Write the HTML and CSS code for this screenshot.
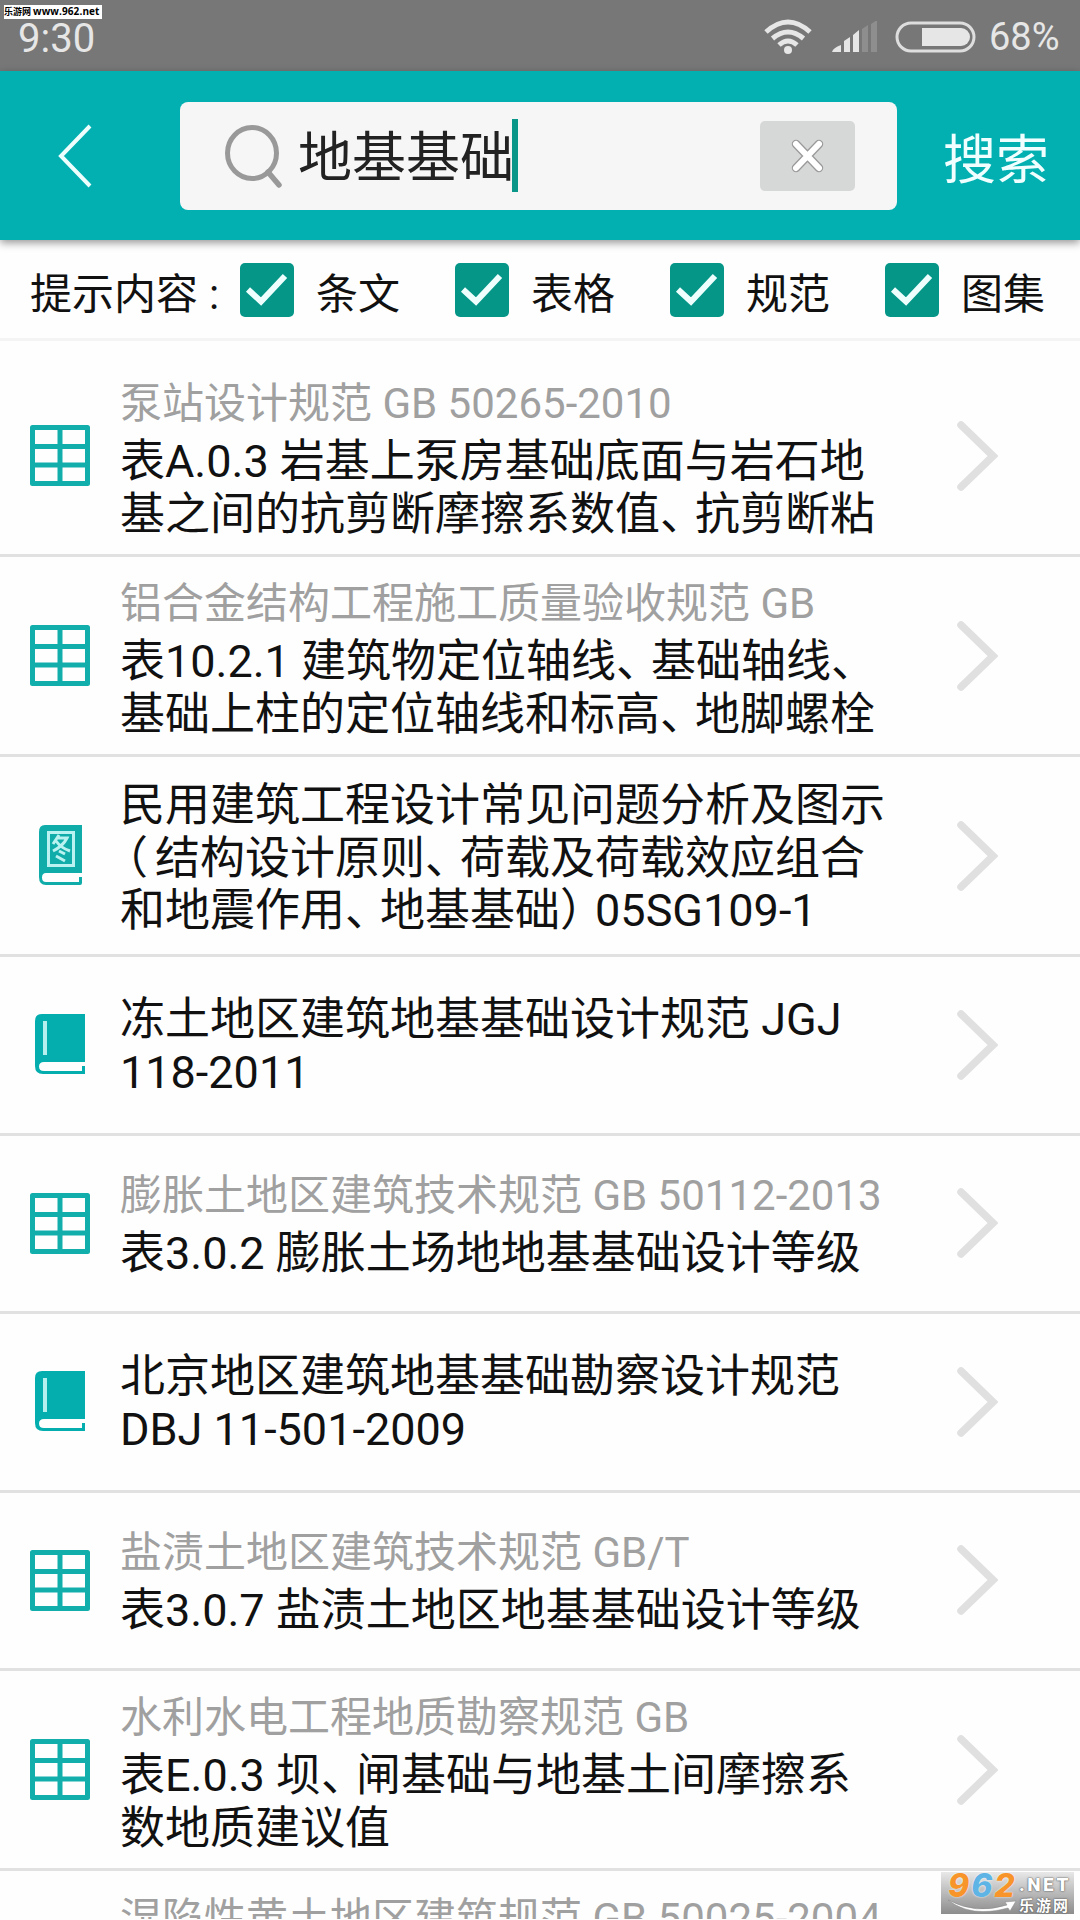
FILE: index.html
```html
<!DOCTYPE html>
<html lang="zh-CN">
<head>
    <meta charset="UTF-8">
    <meta name="viewport" content="width=device-width, initial-scale=1.0">
    <title>搜索</title>
    <link rel="stylesheet" href="styles.css">
</head>
<body>

<!-- shared icons -->
<svg class="sprite">
    <symbol id="table" viewBox="0 0 60 61">
        <path d="M2.500 2.500h55v56h-55zM30 2v57M2 21.500h56M2 40h56" fill="none" stroke="#12aeac" stroke-width="5" stroke-linejoin="round"/>
    </symbol>
    <symbol id="book" viewBox="0 0 50 61">
        <path d="M7 0h43v48H9q-5 0-5 4.500t5 4.500h38v-5h3v8H8q-8 0-8-8V7q0-7 7-7z" fill="#04aeae"/>
        <path d="M10 7v34" stroke="#b5f0ee" stroke-width="4"/>
    </symbol>
    <symbol id="atlas" viewBox="0 0 43 61">
        <path d="M6 0h37v48H7q-4 0-4 4.500t4 4.500h33v-5h3v6q0 2-2 2H7q-7 0-7-8V7q0-7 6-7z" fill="#10aca9"/>
        <path d="M9.500 7.500h25v33h-25z" fill="none" stroke="#b9f2f0" stroke-width="3"/>
        <path d="M20 10l-6 9M18 13h10q-4 8-14 13M17 16q5 7 14 10M20 26l6 3M17 31l9 5" fill="none" stroke="#b9f2f0" stroke-width="3"/>
    </symbol>
    <symbol id="next" viewBox="0 0 42 72">
        <path d="M5 5l32 31L5 67" fill="none" stroke="#e0e0e0" stroke-width="7.500" stroke-linecap="round"/>
    </symbol>
    <symbol id="check" viewBox="0 0 54 54">
        <rect width="54" height="54" rx="5" fill="#059688"/>
        <path d="M8 26.500l13 12L45 13" fill="none" stroke="#effffd" stroke-width="6"/>
    </symbol>
</svg>

<div class="status">
    <span class="time">9:30</span>
    <svg class="wifi" width="48" height="36" viewBox="0 0 48 36">
        <g fill="none" stroke="#e6e6e6" stroke-width="5">
            <path d="M2 13q22-20 44 0"/>
            <path d="M8.500 19.500q15.500-13 31 0"/>
            <path d="M15 26q9-8 18 0"/>
        </g>
        <circle cx="24" cy="31" r="4" fill="#e6e6e6"/>
    </svg>
    <svg class="signal" width="46" height="32" viewBox="0 0 46 32">
        <path d="M0 31q1-4 9-7v7zM12 20l6-4v15h-6zM21 14l6-5v22h-6z" fill="#e6e6e6"/>
        <path d="M30 8l6-4v27h-6zM39 3l6-4v32h-6z" fill="#8e8e8e"/>
    </svg>
    <svg class="battery" width="82" height="32" viewBox="0 0 82 32">
        <rect x="2" y="2" width="77" height="28" rx="14" fill="none" stroke="#dedede" stroke-width="3"/>
        <path d="M27 7h39a9 9 0 0 1 0 18H27z" fill="#e6e6e6"/>
    </svg>
    <span class="percent">68%</span>
</div>

<div class="header">
    <svg class="back" width="36" height="64" viewBox="0 0 36 64">
        <path d="M33 2L4 32l29 30" fill="none" stroke="#effffe" stroke-width="4"/>
    </svg>
    <div class="search-box">
        <svg class="glass" width="60" height="64" viewBox="0 0 60 64">
            <ellipse cx="29" cy="29" rx="24.500" ry="25.500" fill="none" stroke="#999" stroke-width="5"/>
            <path d="M45 48l11 13" stroke="#999" stroke-width="5.500" stroke-linecap="round"/>
        </svg>
        <span class="query">地基基础</span>
        <span class="caret"></span>
        <div class="clear">
            <svg width="34" height="34" viewBox="0 0 34 34">
                <path d="M5 5l23 24M28 5L5 29" stroke="#999" stroke-width="8.500" stroke-linecap="round"/>
                <path d="M5 5l23 24M28 5L5 29" stroke="#fff" stroke-width="6" stroke-linecap="round"/>
            </svg>
        </div>
    </div>
    <span class="submit">搜索</span>
</div>

<div class="filters">
    <span class="label">提示内容<span class="colon">:</span></span>
    <div class="option"><svg><use href="#check"/></svg>条文</div>
    <div class="option"><svg><use href="#check"/></svg>表格</div>
    <div class="option"><svg><use href="#check"/></svg>规范</div>
    <div class="option"><svg><use href="#check"/></svg>图集</div>
</div>

<div class="list">
    <div class="row tall">
        <div class="icon"><svg class="table"><use href="#table"/></svg></div>
        <div class="text">
            <div class="source">泵站设计规范 GB 50265-2010</div>
            <div class="title">表A.0.3 岩基上泵房基础底面与岩石地<br>基之间的抗剪断摩擦系数值<span class="p">、</span>抗剪断粘</div>
        </div>
        <svg class="next"><use href="#next"/></svg>
    </div>
    <div class="row tall">
        <div class="icon"><svg class="table"><use href="#table"/></svg></div>
        <div class="text">
            <div class="source">铝合金结构工程施工质量验收规范 GB</div>
            <div class="title">表10.2.1 建筑物定位轴线<span class="p">、</span>基础轴线<span class="p">、</span><br>基础上柱的定位轴线和标高<span class="p">、</span>地脚螺栓</div>
        </div>
        <svg class="next"><use href="#next"/></svg>
    </div>
    <div class="row tall">
        <div class="icon"><svg class="atlas"><use href="#atlas"/></svg></div>
        <div class="text">
            <div class="title">民用建筑工程设计常见问题分析及图示<br><span class="open">（</span>结构设计原则<span class="p">、</span>荷载及荷载效应组合<br>和地震作用<span class="p">、</span>地基基础<span class="p">）</span>05SG109-1</div>
        </div>
        <svg class="next"><use href="#next"/></svg>
    </div>
    <div class="row">
        <div class="icon"><svg class="book"><use href="#book"/></svg></div>
        <div class="text">
            <div class="title">冻土地区建筑地基基础设计规范 JGJ<br>118-2011</div>
        </div>
        <svg class="next"><use href="#next"/></svg>
    </div>
    <div class="row">
        <div class="icon"><svg class="table"><use href="#table"/></svg></div>
        <div class="text">
            <div class="source">膨胀土地区建筑技术规范 GB 50112-2013</div>
            <div class="title">表3.0.2 膨胀土场地地基基础设计等级</div>
        </div>
        <svg class="next"><use href="#next"/></svg>
    </div>
    <div class="row">
        <div class="icon"><svg class="book"><use href="#book"/></svg></div>
        <div class="text">
            <div class="title">北京地区建筑地基基础勘察设计规范<br>DBJ 11-501-2009</div>
        </div>
        <svg class="next"><use href="#next"/></svg>
    </div>
    <div class="row">
        <div class="icon"><svg class="table"><use href="#table"/></svg></div>
        <div class="text">
            <div class="source">盐渍土地区建筑技术规范 GB/T</div>
            <div class="title">表3.0.7 盐渍土地区地基基础设计等级</div>
        </div>
        <svg class="next"><use href="#next"/></svg>
    </div>
    <div class="row tall">
        <div class="icon"><svg class="table"><use href="#table"/></svg></div>
        <div class="text">
            <div class="source">水利水电工程地质勘察规范 GB</div>
            <div class="title">表E.0.3 坝<span class="p">、</span>闸基础与地基土间摩擦系<br>数地质建议值</div>
        </div>
        <svg class="next"><use href="#next"/></svg>
    </div>
    <div class="row last">
        <div class="icon"></div>
        <div class="text">
            <div class="source">湿陷性黄土地区建筑规范 GB 50025-2004</div>
        </div>
    </div>
</div>

<div class="site-tag">乐游网 <b>www.962.net</b></div>

<div class="logo">
    <svg class="swoosh" width="133" height="42" viewBox="0 0 133 42">
        <path d="M7 28q28 15 59 5l-2-3 11-1-6 10-2-3Q30 46 7 28z" fill="#fff" stroke="#888" stroke-width=".5"/>
    </svg>
    <div class="digits">9<span>6</span>2</div>
    <div class="names">
        <div class="net">.NET</div>
        <div class="cn">乐游网</div>
    </div>
</div>

</body>
</html>
```

FILE: styles.css
```css
* {
    box-sizing: border-box;
}

body {
    margin: 0;
    width: 1080px;
    height: 1920px;
    overflow: hidden;
    position: relative;
    background: #fefefe;
    color: #111;
    font-family: Roboto, "Noto Sans CJK SC", sans-serif;
    white-space: nowrap;
}

svg {
    display: block;
    flex: none;
}

.sprite {
    display: none;
}

.status {
    display: flex;
    align-items: center;
    height: 71px;
    padding: 3px 19px 0 18px;
    background: #777;
    color: #e6e6e6;
}

.time {
    flex: 1;
    padding-top: 4px;
    font-size: 40px;
    line-height: 34px;
}

.wifi {
    margin-right: 20px;
}

.signal {
    margin-right: 17px;
}

.battery {
    margin-right: 12px;
}

.percent {
    width: 72px;
    font-size: 38px;
}

.header {
    display: flex;
    align-items: center;
    height: 169px;
    padding-left: 57px;
    background: #02b0b1;
    position: relative;
    box-shadow: 0 3px 8px rgba(0, 0, 0, 0.4);
}

.search-box {
    display: flex;
    align-items: center;
    width: 717px;
    height: 108px;
    margin-left: 87px;
    padding-left: 43px;
    border-radius: 8px;
    background: #f6f6f6;
}

.query {
    margin-left: 15px;
    padding-top: 6px;
    font-size: 54px;
    line-height: 80px;
    color: #222;
}

.caret {
    width: 6px;
    height: 73px;
    margin-left: -2px;
    background: #0a9688;
}

.clear {
    display: flex;
    align-items: center;
    justify-content: center;
    width: 95px;
    height: 70px;
    margin-left: auto;
    margin-right: 42px;
    border-radius: 5px;
    background: #d6d8d7;
}

.submit {
    margin-left: 46px;
    font-size: 53px;
    color: #f0ffff;
}

.filters {
    display: flex;
    align-items: center;
    height: 101px;
    padding-top: 2px;
    padding-left: 30px;
    border-bottom: 3px solid #f4f4f4;
    font-size: 42px;
}

.label {
    flex: none;
    width: 210px;
}

.colon {
    margin-left: 11px;
}

.option {
    display: flex;
    flex: none;
    align-items: center;
    width: 215px;
}

.option:last-child {
    width: 180px;
}

.option svg {
    width: 54px;
    height: 54px;
    margin-right: 22px;
}

.list {
    padding-top: 16px;
}

.row {
    display: flex;
    align-items: center;
    height: 178.500px;
    border-bottom: 3px solid #e1e1e1;
}

.row.tall {
    height: 200px;
}

.icon {
    display: flex;
    justify-content: center;
    width: 120px;
    flex: none;
}

.table {
    width: 60px;
    height: 61px;
}

.book {
    width: 50px;
    height: 61px;
}

.atlas {
    width: 43px;
    height: 61px;
}

.text {
    width: 836px;
    padding-top: 4px;
}

.tall .text {
    padding-top: 7px;
}

.source {
    margin-bottom: 6px;
    color: #a0a0a0;
    font-size: 42px;
    line-height: 53px;
}

.title {
    font-size: 45px;
    line-height: 52.700px;
}

/* narrower full-width punctuation */
.p {
    letter-spacing: -10px;
}

.open {
    margin-left: -17px;
    margin-right: 7px;
}

.next {
    width: 42px;
    height: 72px;
}

.row.last {
    align-items: flex-start;
    height: 48px;
    padding-top: 17px;
    border-bottom: none;
    overflow: hidden;
}

.site-tag {
    position: absolute;
    left: 4px;
    top: 5px;
    width: 98px;
    height: 14px;
    overflow: hidden;
    background: #fff;
    color: #000;
    font: 700 9px/13px "Noto Sans CJK SC", sans-serif;
}

.site-tag b {
    font: 700 10px/13px "Open Sans", sans-serif;
    letter-spacing: 0.1px;
}

.logo {
    position: absolute;
    left: 941px;
    top: 1872px;
    display: flex;
    width: 133px;
    height: 42px;
    background: linear-gradient(#e8e8e8, #8c8c8c);
}

.swoosh {
    position: absolute;
    left: 0;
    top: 0;
}

.digits {
    width: 78px;
    padding-left: 7px;
    color: #f7942a;
    font: italic 800 32px/27px Inter, sans-serif;
    letter-spacing: 2px;
    text-shadow: 0 0 2px #fff;
}

.digits span {
    color: #5db4e5;
}

.names {
    color: #fff;
    text-shadow: 0 0 2px #555, 0 0 1px #555;
}

.net {
    font: 900 19px/26px Roboto, sans-serif;
    letter-spacing: 2.500px;
}

.cn {
    font: 700 15px/13px "Noto Sans CJK SC", sans-serif;
    letter-spacing: 2px;
}
```
